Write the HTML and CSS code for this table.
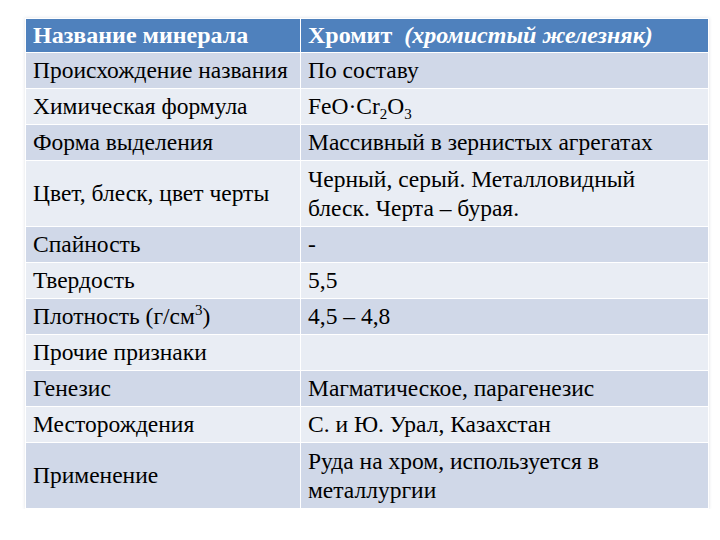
FILE: index.html
```html
<!DOCTYPE html>
<html lang="ru">
<head>
<meta charset="utf-8">
<link rel="stylesheet" href="styles.css">
</head>
<body>
<table class="mineral">
  <colgroup><col class="c1"><col class="c2"></colgroup>
  <thead>
    <tr class="head"><th>Название минерала</th><th>Хромит&nbsp; <i>(хромистый железняк)</i></th></tr>
  </thead>
  <tbody>
    <tr class="dark"><td>Происхождение названия</td><td>По составу</td></tr>
    <tr class="light"><td>Химическая формула</td><td>FeO·Cr<sub>2</sub>O<sub>3</sub></td></tr>
    <tr class="dark"><td>Форма выделения</td><td>Массивный в зернистых агрегатах</td></tr>
    <tr class="light tall"><td>Цвет, блеск, цвет черты</td><td>Черный, серый. Металловидный<br>блеск. Черта – бурая.</td></tr>
    <tr class="dark"><td>Спайность</td><td>-</td></tr>
    <tr class="light"><td>Твердость</td><td>5,5</td></tr>
    <tr class="dark"><td>Плотность (г/см<sup>3</sup>)</td><td>4,5 – 4,8</td></tr>
    <tr class="light"><td>Прочие признаки</td><td></td></tr>
    <tr class="dark"><td>Генезис</td><td>Магматическое, парагенезис</td></tr>
    <tr class="light"><td>Месторождения</td><td>С. и Ю. Урал, Казахстан</td></tr>
    <tr class="dark tall"><td>Применение</td><td>Руда на хром, используется в<br>металлургии</td></tr>
  </tbody>
</table>
</body>
</html>
```
FILE: styles.css
```css
html, body {
  margin: 0;
  padding: 0;
  background: #ffffff;
}
body {
  padding: 18px 0 0 25px;
}
.mineral {
  border-collapse: collapse;
  table-layout: fixed;
  width: 683px;
  font-family: "Liberation Serif", serif;
  font-size: 23.5px;
  color: #000000;
  box-shadow: 0 0 3px rgba(120, 130, 150, 0.25);
}
.c1 { width: 275px; }
.c2 { width: 408px; }
.mineral th, .mineral td {
  border: 1.5px solid #ffffff;
  padding: 0 7px;
  text-align: left;
  vertical-align: middle;
  line-height: 29px;
  height: 35px;
  white-space: nowrap;
}
.head th {
  background: #4f81bd;
  color: #ffffff;
  font-weight: bold;
  font-size: 24px;
  height: 33px;
}
.head i { font-style: italic; }
.dark td { background: #d0d8e8; }
.light td { background: #e9edf4; }
.tall td { height: 65px; }
sub, sup {
  font-size: 15px;
  line-height: 0;
}
sub { vertical-align: -5px; }
sup { vertical-align: 9px; }
```
